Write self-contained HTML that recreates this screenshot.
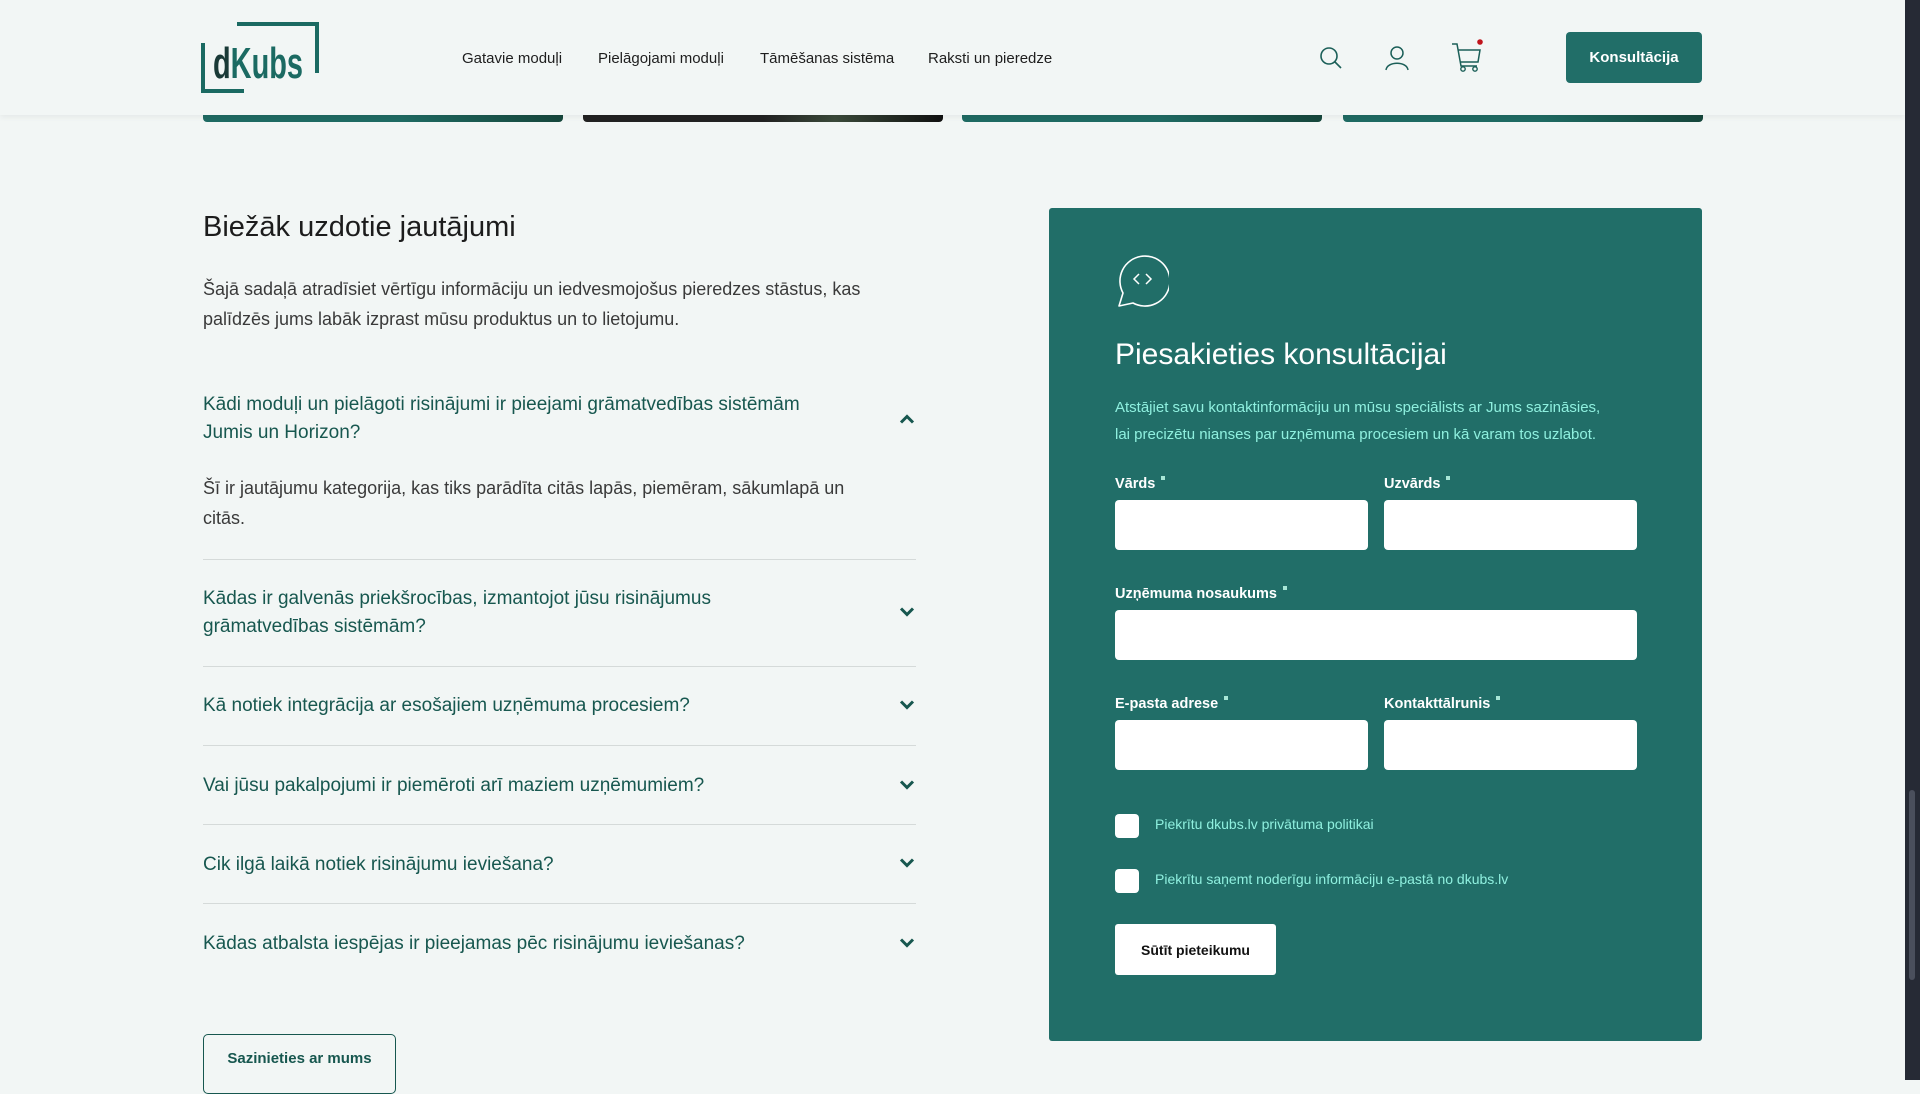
<!DOCTYPE html>
<html><head><meta charset="utf-8">
<style>
*{margin:0;padding:0;box-sizing:border-box}
body{width:1920px;height:1080px;overflow:hidden;background:#f2f6f5;font-family:"Liberation Sans",sans-serif;position:relative;color:#222}
.a{position:absolute}
.hdr{left:0;top:0;width:1905px;height:115px;background:#f2f6f5;box-shadow:0 2px 6px rgba(0,0,0,.06);z-index:2}
.nav{top:50px;font-size:15px;color:#1e1e1e}
.strip{top:112px;height:10px;border-radius:0 0 4px 4px;background:linear-gradient(90deg,#1f6b63 0,#1f6b63 55%,#17473c 100%)}
.scroll{left:1905px;top:0;width:15px;height:1080px;background:#262a35}
.q{left:203px;font-size:19px;line-height:28px;color:#17574f}
.div{left:203px;width:713px;height:1px;background:#d5dad9}
.chev{left:899px;width:16px;height:10px}
.form{left:1049px;top:208px;width:653px;height:833px;background:#216e68;border-radius:3px}
.lbl{font-size:14.5px;font-weight:bold;color:#fff}
.lbl i{display:inline-block;width:4px;height:4px;background:#a8e6d6;vertical-align:top;margin-left:6px;margin-top:0}
.inp{background:#fff;border-radius:4px;height:50px}
.cb{width:24px;height:24px;background:#fff;border-radius:4px}
.cbt{font-size:14px;color:#8ff0df}
</style></head><body>
<div class="a strip" style="left:203px;width:360px"></div>
<div class="a strip" style="left:583px;width:360px;background:linear-gradient(90deg,#222 0,#222 50%,#3b4a3a 70%,#111 100%)"></div>
<div class="a strip" style="left:962px;width:360px"></div>
<div class="a strip" style="left:1343px;width:360px"></div>
<div class="a hdr">
  <svg class="a" style="left:201px;top:21px" width="120" height="73" viewBox="0 0 120 73">
    <path d="M2 22 V70 H43" fill="none" stroke="#1b6a62" stroke-width="4"/>
    <path d="M36 3 H116 V52" fill="none" stroke="#1b6a62" stroke-width="4"/>
    <text x="12" y="57" font-family="Liberation Sans Narrow,Liberation Sans,sans-serif" font-weight="bold" font-size="44" fill="#1b6a62" textLength="90" lengthAdjust="spacingAndGlyphs"><tspan fill="#1a3a37">d</tspan>Kubs</text>
  </svg>
  <div class="a nav" style="left:462px">Gatavie moduļi</div>
  <div class="a nav" style="left:598px">Pielāgojami moduļi</div>
  <div class="a nav" style="left:760px">Tāmēšanas sistēma</div>
  <div class="a nav" style="left:928px">Raksti un pieredze</div>
  <svg class="a" style="left:1319px;top:46px" width="24" height="24" viewBox="0 0 24 24"><circle cx="10" cy="10" r="8" fill="none" stroke="#1b5f58" stroke-width="1.6"/><path d="M16 16 L22 22" stroke="#1b5f58" stroke-width="1.6"/></svg>
  <svg class="a" style="left:1385px;top:45px" width="24" height="26" viewBox="0 0 24 26"><circle cx="12" cy="8" r="6" fill="none" stroke="#1b5f58" stroke-width="1.5"/><path d="M1 25 C2 16 22 16 23 25" fill="none" stroke="#1b5f58" stroke-width="1.5"/></svg>
  <svg class="a" style="left:1451px;top:38px" width="32" height="34" viewBox="0 0 32 34"><path d="M1 6 H6 L10 28 H26 M7.5 12 H29 L27 24 H9.5" fill="none" stroke="#1b5f58" stroke-width="1.5"/><circle cx="12" cy="31" r="2.2" fill="none" stroke="#1b5f58" stroke-width="1.4"/><circle cx="24" cy="31" r="2.2" fill="none" stroke="#1b5f58" stroke-width="1.4"/><circle cx="29" cy="4" r="2.8" fill="#c0141c"/></svg>
  <div class="a" style="left:1566px;top:32px;width:136px;height:51px;background:#216e68;border-radius:4px;color:#fff;font-weight:bold;font-size:15px;line-height:51px;text-align:center">Konsultācija</div>
</div>
<div class="a scroll"><div class="a" style="left:4px;top:790px;width:6px;height:190px;background:#4a4f5c;border-radius:3px"></div></div>

<div class="a" style="left:203px;top:211px;font-size:29px;color:#1c1c1c">Biežāk uzdotie jautājumi</div>
<div class="a" style="left:203px;top:274px;width:720px;font-size:18px;line-height:30px;color:#3a3a3a">Šajā sadaļā atradīsiet vērtīgu informāciju un iedvesmojošus pieredzes stāstus, kas palīdzēs jums labāk izprast mūsu produktus un to lietojumu.</div>

<div class="a q" style="top:391px;width:640px">Kādi moduļi un pielāgoti risinājumi ir pieejami grāmatvedības sistēmām Jumis un Horizon?</div>
<svg class="a chev" style="top:414px" viewBox="0 0 16 10"><path d="M2 8.5 L8 2.5 L14 8.5" fill="none" stroke="#17574f" stroke-width="3"/></svg>
<div class="a" style="left:203px;top:473px;width:680px;font-size:18px;line-height:30px;color:#3a3a3a">Šī ir jautājumu kategorija, kas tiks parādīta citās lapās, piemēram, sākumlapā un citās.</div>
<div class="a div" style="top:559px"></div>
<div class="a q" style="top:585px;width:620px">Kādas ir galvenās priekšrocības, izmantojot jūsu risinājumus grāmatvedības sistēmām?</div>
<svg class="a chev" style="top:607px" viewBox="0 0 16 10"><path d="M2 1.5 L8 7.5 L14 1.5" fill="none" stroke="#17574f" stroke-width="3"/></svg>
<div class="a div" style="top:666px"></div>
<div class="a q" style="top:692px">Kā notiek integrācija ar esošajiem uzņēmuma procesiem?</div>
<svg class="a chev" style="top:700px" viewBox="0 0 16 10"><path d="M2 1.5 L8 7.5 L14 1.5" fill="none" stroke="#17574f" stroke-width="3"/></svg>
<div class="a div" style="top:745px"></div>
<div class="a q" style="top:772px">Vai jūsu pakalpojumi ir piemēroti arī maziem uzņēmumiem?</div>
<svg class="a chev" style="top:780px" viewBox="0 0 16 10"><path d="M2 1.5 L8 7.5 L14 1.5" fill="none" stroke="#17574f" stroke-width="3"/></svg>
<div class="a div" style="top:824px"></div>
<div class="a q" style="top:851px">Cik ilgā laikā notiek risinājumu ieviešana?</div>
<svg class="a chev" style="top:858px" viewBox="0 0 16 10"><path d="M2 1.5 L8 7.5 L14 1.5" fill="none" stroke="#17574f" stroke-width="3"/></svg>
<div class="a div" style="top:903px"></div>
<div class="a q" style="top:930px">Kādas atbalsta iespējas ir pieejamas pēc risinājumu ieviešanas?</div>
<svg class="a chev" style="top:938px" viewBox="0 0 16 10"><path d="M2 1.5 L8 7.5 L14 1.5" fill="none" stroke="#17574f" stroke-width="3"/></svg>

<div class="a" style="left:203px;top:1034px;width:193px;height:60px;border:1.5px solid #17574f;border-radius:5px;text-align:center;line-height:48px;font-weight:bold;font-size:15px;color:#17574f">Sazinieties ar mums</div>

<div class="a form">
  <svg class="a" style="left:64px;top:45px" width="56" height="56" viewBox="0 0 56 56"><path d="M6 53 L10 40 A25 25 0 1 1 20 50 Z" fill="none" stroke="#fff" stroke-width="1.6" stroke-linejoin="round"/><path d="M26 21 L21 26 L26 31 M33 21 L38 26 L33 31" fill="none" stroke="#fff" stroke-width="1.5"/></svg>
  <div class="a" style="left:66px;top:130px;font-size:30px;color:#fff">Piesakieties konsultācijai</div>
  <div class="a" style="left:66px;top:186px;width:490px;font-size:15px;line-height:27px;color:#8ff0df">Atstājiet savu kontaktinformāciju un mūsu speciālists ar Jums sazināsies, lai precizētu nianses par uzņēmuma procesiem un kā varam tos uzlabot.</div>
  <div class="a lbl" style="left:66px;top:268px">Vārds<i></i></div>
  <div class="a lbl" style="left:335px;top:268px">Uzvārds<i></i></div>
  <div class="a inp" style="left:66px;top:292px;width:253px"></div>
  <div class="a inp" style="left:335px;top:292px;width:253px"></div>
  <div class="a lbl" style="left:66px;top:378px">Uzņēmuma nosaukums<i></i></div>
  <div class="a inp" style="left:66px;top:402px;width:522px"></div>
  <div class="a lbl" style="left:66px;top:488px">E-pasta adrese<i></i></div>
  <div class="a lbl" style="left:335px;top:488px">Kontakttālrunis<i></i></div>
  <div class="a inp" style="left:66px;top:512px;width:253px"></div>
  <div class="a inp" style="left:335px;top:512px;width:253px"></div>
  <div class="a cb" style="left:66px;top:606px"></div>
  <div class="a cbt" style="left:106px;top:608px">Piekrītu dkubs.lv privātuma politikai</div>
  <div class="a cb" style="left:66px;top:661px"></div>
  <div class="a cbt" style="left:106px;top:663px">Piekrītu saņemt noderīgu informāciju e-pastā no dkubs.lv</div>
  <div class="a" style="left:66px;top:716px;width:161px;height:51px;background:#fff;border-radius:3px;text-align:center;line-height:53px;font-weight:bold;font-size:14px;color:#111">Sūtīt pieteikumu</div>
</div>
</body></html>
